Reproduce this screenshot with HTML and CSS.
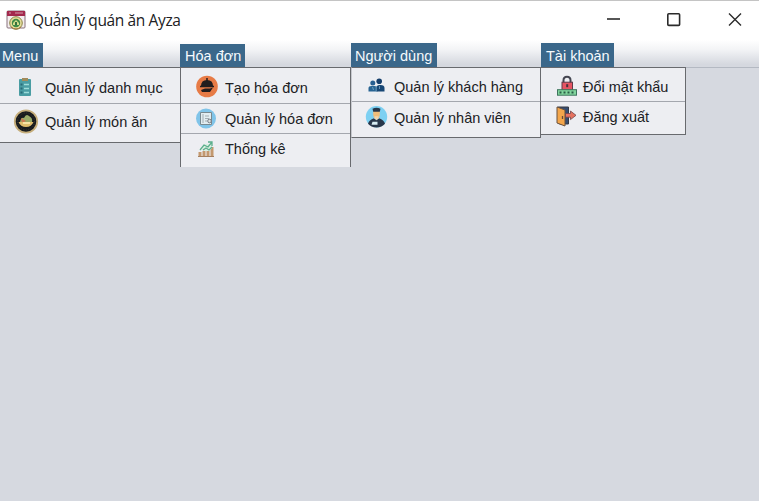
FILE: index.html
```html
<!DOCTYPE html>
<html lang="vi">
<head>
<meta charset="utf-8">
<title>Quản lý quán ăn Ayza</title>
<link rel="stylesheet" href="styles.css">
</head>
<body>
<header class="titlebar">
  <svg class="app-icon" width="20" height="20" viewBox="0 0 20 20">
    <rect x="1" y="1" width="18" height="17" rx="1" fill="#f4eeee" stroke="#87717c"/>
    <rect x="1" y="1" width="18" height="5" fill="#a3294d"/>
    <path d="M3 3h2M9 3h8" stroke="#d5a0ae"/>
    <circle cx="10" cy="13" r="6.3" fill="#e6dd9a" stroke="#8a8547"/>
    <circle cx="10" cy="13" r="4.2" fill="#3f8b45"/>
    <path d="M7 13l3-3 3 3v2H7z" fill="#d3dc8a"/>
    <path d="M9 12h2v3H9z" fill="#39713c"/>
    <path d="M5 17q5 4 10 0" fill="none" stroke="#a2763e"/>
  </svg>
  <h1 class="title">Quản lý quán ăn Ayza</h1>
  <svg class="controls" width="140" height="20" viewBox="0 0 140 20" fill="none" stroke="#2b2b2b" stroke-width="1.6">
    <path d="M6 9h13"/>
    <rect x="66.800" y="3.800" width="11.800" height="11.600" rx="1"/>
    <path d="M128 3.500l12 12M140 3.500l-12 12" stroke-width="1.400"/>
  </svg>
</header>
<nav class="menubar">
  <section class="menu menu-food">
    <h2 class="tab">Menu</h2>
    <ul class="panel">
      <li class="item">
        <svg class="icon" width="26" height="26" viewBox="0 0 26 26">
          <rect x="7" y="6" width="12" height="17" rx="1" fill="#4a9da3"/>
          <rect x="10" y="5" width="6" height="3" fill="#a18b5b"/>
          <path d="M12 11.500h5M12 15.500h5M12 19.500h5" stroke="#9bdcd9" stroke-width="1.500"/>
          <path d="M8.500 11.500h2M8.500 15.500h2M8.500 19.500h2" stroke="#286a78" stroke-width="1.800"/>
        </svg>
        <span class="label">Quản lý danh mục</span>
      </li>
      <li class="item">
        <svg class="icon" width="26" height="26" viewBox="0 0 26 26">
          <circle cx="13" cy="12.500" r="11.200" fill="#171a1e" stroke="#c6ae7b" stroke-width="1.800"/>
          <circle cx="13" cy="12.500" r="8.500" fill="none" stroke="#4c4634" stroke-width=".7" stroke-dasharray="1 1.500"/>
          <path d="M7 13q1-5 4-4 2-5 5-2 4 2 3 6z" fill="#99aa69"/>
          <path d="M8 9l5 3-4 2z" fill="#cc7653"/>
          <path d="M5.500 13h15q-2 5-7.500 5t-7.500-5z" fill="#dfbd6d"/>
          <path d="M10 14h7" stroke="#fff0b8" stroke-width="1.500"/>
        </svg>
        <span class="label">Quản lý món ăn</span>
      </li>
    </ul>
  </section>
  <section class="menu menu-bill">
    <h2 class="tab">Hóa đơn</h2>
    <ul class="panel">
      <li class="item">
        <svg class="icon" width="26" height="26" viewBox="0 0 26 26">
          <circle cx="13" cy="13.500" r="10.800" fill="#e77b46"/>
          <path d="M7 13q0-6 6-6t6 6z" fill="#221d1e"/>
          <path d="M13 5v3M6 13.500h14" stroke="#221d1e" stroke-width="1.500" fill="none"/>
          <path d="M7 17l4-1.500h5l3-1-3 4.500H8z" fill="#221d1e"/>
        </svg>
        <span class="label">Tạo hóa đơn</span>
      </li>
      <li class="item">
        <svg class="icon" width="26" height="26" viewBox="0 0 26 26">
          <circle cx="12" cy="12.500" r="10" fill="#80c4e9"/>
          <path d="M6.500 6.500h11v12h-11z" fill="#e2edf1" stroke="#788990"/>
          <path d="M9 8v9M11 10h4M11 12.500h4M11 15h2" stroke="#a2adb2"/>
          <circle cx="15.500" cy="15" r="1.800" fill="#dce2df" stroke="#767b85"/>
        </svg>
        <span class="label">Quản lý hóa đơn</span>
      </li>
      <li class="item">
        <svg class="icon" width="26" height="26" viewBox="0 0 26 26">
          <path d="M4.500 20v-4h3v4zM8.500 20v-5h3v5zM12.500 20v-5h3v5zM16.500 20V11h3v9z" fill="#c3986e"/>
          <path d="M4 20.500h16" stroke="#a57f5e"/>
          <path d="M8 12l3-4h7v4l-3 3H9z" fill="#dceee2"/>
          <path d="M6 14l4-5 4 2 4-5M14 6h4v4M9 14l3-2 3 2 3-3" fill="none" stroke="#5baf8c" stroke-width="1.300"/>
        </svg>
        <span class="label">Thống kê</span>
      </li>
    </ul>
  </section>
  <section class="menu menu-user">
    <h2 class="tab">Người dùng</h2>
    <ul class="panel">
      <li class="item">
        <svg class="icon" width="26" height="26" viewBox="0 0 26 26">
          <circle cx="8.800" cy="11" r="2.500" fill="#285f91"/>
          <path d="M4.500 19.500v-3.500q0-2 3-2h3q3 0 3 2v3.500z" fill="#286493"/>
          <circle cx="15.200" cy="9.300" r="2.800" fill="#153e6b"/>
          <path d="M12.500 19.500v-4q0-2.500 3-2.500h1q4 0 4 3v3.500z" fill="#164675"/>
          <path d="M12.200 14v5.500M8.500 15l1 3M15.500 14v3" stroke="#99c3dc" stroke-width=".6"/>
        </svg>
        <span class="label">Quản lý khách hàng</span>
      </li>
      <li class="item">
        <svg class="icon" width="26" height="26" viewBox="0 0 26 26">
          <circle cx="12.500" cy="11.800" r="10.700" fill="#7dd0f2"/>
          <g transform="translate(-.5 -1.200)">
            <path d="M9.700 7h6.600v4q-.5 4-3.300 4t-3.300-4z" fill="#efbd79"/>
            <path d="M9 5q4-2 8 0l-.7 3H9.700z" fill="#273649"/>
            <path d="M4.500 20q1-4 6-5.500l2.500 2 2.500-2q5 1.500 6 5.500-3 3.700-8.500 3.700T4.500 20z" fill="#29374a"/>
            <path d="M11 14.500l2 2 2-2v-2h-4z" fill="#f2d4ab"/>
            <path d="M9 18h5v3H8z" fill="#d8edf3"/>
          </g>
        </svg>
        <span class="label">Quản lý nhân viên</span>
      </li>
    </ul>
  </section>
  <section class="menu menu-account">
    <h2 class="tab">Tài khoản</h2>
    <ul class="panel">
      <li class="item">
        <svg class="icon" width="26" height="26" viewBox="0 0 26 26">
          <g transform="translate(1 1.200)">
            <path d="M9.500 10V7q0-3.500 3.500-3.500T16.500 7v3" fill="none" stroke="#444651" stroke-width="2"/>
            <rect x="8" y="9" width="10.500" height="8" fill="#e65563" stroke="#603b49"/>
            <path d="M13.200 11v3" stroke="#42313b" stroke-width="2"/>
            <rect x="3.500" y="16.500" width="19" height="5.500" fill="#80d59d" stroke="#3e745d"/>
            <path d="M5.500 19.300h15" stroke="#285b45" stroke-width="2" stroke-dasharray="2 2"/>
          </g>
        </svg>
        <span class="label">Đổi mật khẩu</span>
      </li>
      <li class="item">
        <svg class="icon" width="26" height="26" viewBox="0 0 26 26">
          <g transform="translate(.5 -2)">
            <path d="M4 4h11v17H6z" fill="#354d72" stroke="#363a45"/>
            <path d="M3.500 4l8 3v16l-8-3z" fill="#f4a64b" stroke="#69513f"/>
            <path d="M9 13v3" stroke="#684b38" stroke-width="1.300"/>
            <path d="M12 10.500h5V8l5.500 4.300-5.500 4.300v-2.400h-5z" fill="#e67260" stroke="#71464b" stroke-width=".8"/>
          </g>
        </svg>
        <span class="label">Đăng xuất</span>
      </li>
    </ul>
  </section>
</nav>
</body>
</html>
```
FILE: styles.css
```css
* { box-sizing: border-box; }
body {
  margin: 0;
  height: 501px;
  overflow: hidden;
  background: #d6d9e0;
  color: #202124;
  font-family: "Liberation Sans", Arial, sans-serif;
}
h1, h2, ul { margin: 0; padding: 0; font-weight: normal; }
.titlebar {
  display: flex;
  align-items: center;
  height: 40px;
  padding: 0 18px 2px 6px;
  border-top: 1px solid #c4c4c4;
  background: #fff;
}
.app-icon { flex: none; }
.title {
  flex: 1;
  margin-left: 6px;
  font: 15.5px/20px "Open Sans", sans-serif;
  letter-spacing: -.38px;
  white-space: nowrap;
}
.controls { flex: none; overflow: visible; }
.menubar {
  display: flex;
  align-items: flex-start;
  height: 28px;
  background: linear-gradient(#fff, #f3f4f6 35%, #d5d8df 90%, #d5d8df);
  border-bottom: 1px solid #b4b9c2;
}
.menu { flex: none; padding-top: 3px; }
.tab {
  height: 24px;
  background: #3a678a;
  color: #f5fafd;
  font-size: 14.5px;
  line-height: 26px;
  white-space: nowrap;
}
.panel {
  list-style: none;
  background: #edeef2;
  border: 1px solid #686a6e;
}
.item { display: flex; align-items: center; white-space: nowrap; }
.item + .item { border-top: 1px solid #a4a7ae; }
.icon { flex: none; }
.label { font-size: 14.5px; line-height: 20px; }

.menu-food { width: 180px; }
.menu-food .tab { width: 43px; padding-left: 2px; }
.menu-food .panel { height: 76px; border-left: 0; border-right: 0; }
.menu-food .item { height: 35px; padding-left: 12px; }
.menu-food .item + .item { height: 36px; padding-left: 13px; }
.menu-food .label { margin: 4px 0 0 7px; }
.menu-food .item + .item .label { margin: 0 0 0 6px; }

.menu-bill { width: 171px; }
.menu-bill .tab { width: 65px; height: 23px; margin-top: 1px; padding-left: 5px; line-height: 24px; }
.menu-bill .panel { height: 100px; border-bottom: 0; }
.menu-bill .item { height: 35px; padding-left: 13px; }
.menu-bill .item + .item { height: 30px; }
.menu-bill .label { margin: 4px 0 0 5px; }
.menu-bill .item + .item .label { margin-top: 0; }

.menu-user { width: 190px; }
.menu-user .tab { width: 86px; padding-left: 4px; }
.menu-user .panel { height: 71px; border-left-color: #c6c8ce; }
.menu-user .item { height: 33px; padding-left: 12px; }
.menu-user .label { margin: 5px 0 0 4px; }
.menu-user .item + .item .label { margin-top: 0; }

.menu-account { width: 145px; }
.menu-account .tab { width: 73px; padding-left: 5px; }
.menu-account .panel { height: 68px; border-left: 0; }
.menu-account .item { height: 33px; padding-left: 12px; }
.menu-account .label { margin: 5px 0 0 4px; }
.menu-account .item + .item .label { margin: 0 0 2px 4px; }
```
